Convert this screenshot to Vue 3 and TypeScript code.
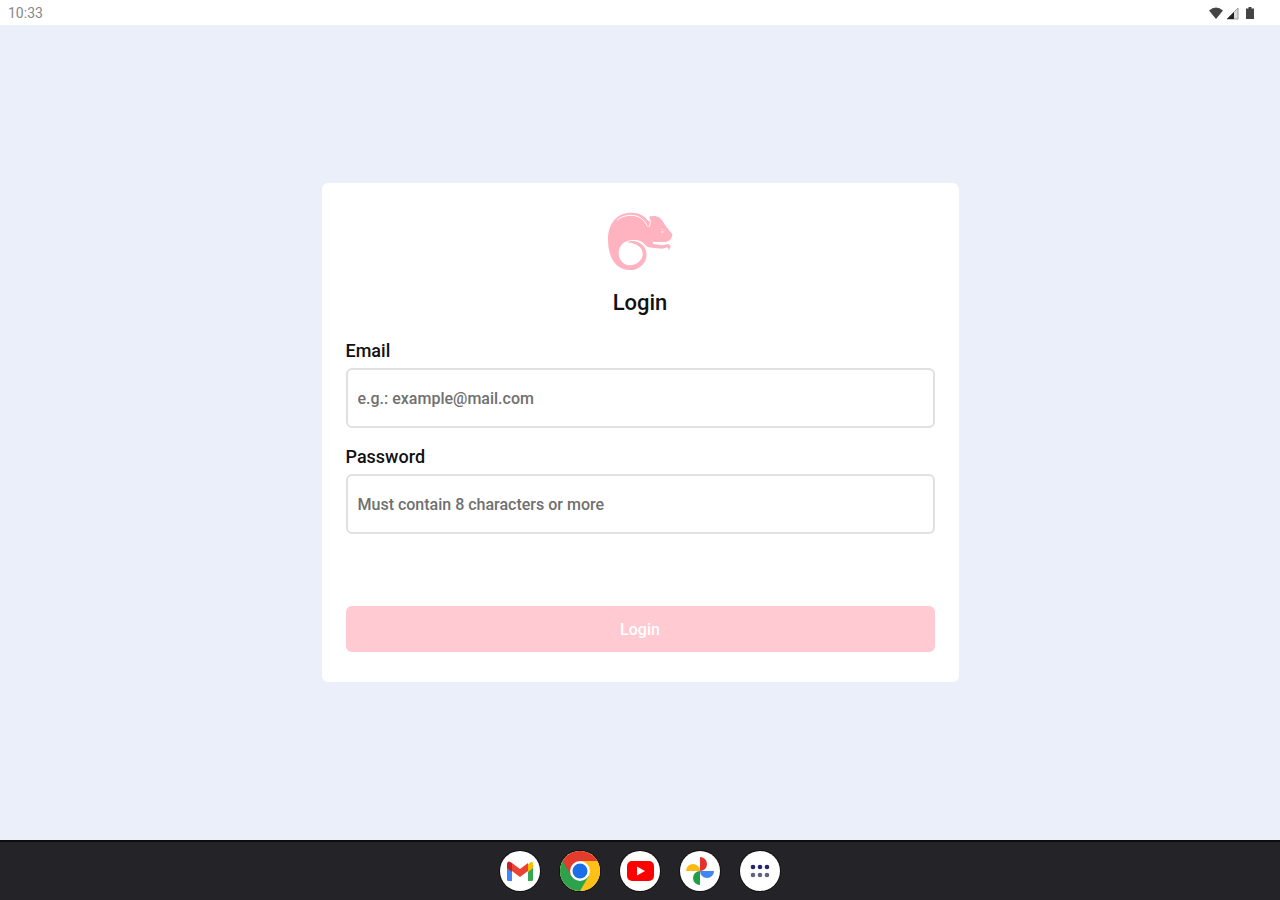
<script setup lang="ts">
import { ref } from 'vue'

const email = ref('')
const password = ref('')
</script>

<template>
  <div class="screen">
    <header class="status">
      <span class="clock">10:33</span>
      <div class="signals">
        <svg width="16" height="14" viewBox="0 0 16 14" aria-hidden="true">
          <path d="M1 4.500Q8-1.500 15 4.500L8 13Z" fill="#444" />
        </svg>
        <svg width="14" height="14" viewBox="0 0 14 14" aria-hidden="true">
          <path d="M1 13 12 2V13Z" fill="#ddd" stroke="#999" />
          <path d="M1 13 8 6V13Z" fill="#222" />
        </svg>
        <svg class="battery" width="8" height="14" viewBox="0 0 8 14" aria-hidden="true">
          <path d="M2.500 1h3v1.500H8V13H0V2.500h2.500Z" fill="#444" />
        </svg>
      </div>
    </header>

    <main class="stage">
      <form class="card" @submit.prevent>
        <svg class="logo" width="68" height="60" viewBox="48 33 204 180" aria-hidden="true">
          <path
            d="M54 118C54 68 83 38 124 38C148 38 164 48 174 62C177 66 179 65 179 60L177 50C186 47 202 48 210 54C218 60 220 69 229 80L247 103C246 117 239 124 227 126L190 125C187 129 190 132 196 133L218 136L235 132L242 139L238 150L232 142L217 146L185 143C175 142 169 141 164 139C170 147 172 156 170 168C166 193 145 210 119 210C82 210 54 180 54 118Z"
            fill="#ffb3c0"
          />
          <path
            d="M124 121C145 117 158 124 174 142L172 160C168 182 151 197 124 197C101 197 86 180 86 159C86 138 102 122 124 121Z"
            fill="#fff"
          />
          <path
            d="M110 127C129 118 151 124 163 141C174 159 170 180 157 194C146 205 133 210 119 210L115 195C133 198 147 189 155 175C164 157 155 130 110 127Z"
            fill="#ffb3c0"
          />
          <path
            d="M82 60C99 44 134 40 155 56C163 62 168 70 172 78"
            fill="none"
            stroke="#fff"
            stroke-width="3"
            stroke-linecap="round"
          />
          <path d="M177 53C183 64 182 72 177 80" fill="none" stroke="#fff" stroke-width="3" stroke-linecap="round" />
          <path d="M188 129H226" stroke="#fff" stroke-width="5" />
          <circle cx="217" cy="96" r="4" fill="#ffdce2" />
          <path d="M210 89Q218 83 225 92" fill="none" stroke="#ffd3da" stroke-width="2" />
        </svg>
        <h1 class="title">Login</h1>

        <div class="field">
          <label for="email">Email</label>
          <input id="email" v-model="email" type="email" placeholder="e.g.: example@mail.com" />
        </div>
        <div class="field">
          <label for="password">Password</label>
          <input id="password" v-model="password" type="password" placeholder="Must contain 8 characters or more" />
        </div>

        <button class="submit" type="submit">Login</button>
      </form>
    </main>

    <nav class="dock" aria-label="Apps">
      <button class="app" type="button" aria-label="Gmail">
        <svg viewBox="0 0 40 40" aria-hidden="true">
          <path d="M7 14 12 18V30H8.500Q7 30 7 28.500Z" fill="#4285f4" />
          <path d="M28 18 33 14V28.500Q33 30 31.500 30H28Z" fill="#34a853" />
          <path d="M28 13.500Q33 8 33 14V17L28 21Z" fill="#fbbc04" />
          <path d="M7 14Q7 8 12 12V21L7 17Z" fill="#c5221f" />
          <path d="M12 12 20 18 28 12V20L20 26 12 20Z" fill="#ea4335" />
        </svg>
      </button>
      <button class="app" type="button" aria-label="Chrome">
        <svg viewBox="0 0 40 40" aria-hidden="true">
          <circle cx="20" cy="20" r="20" fill="#fbc116" />
          <path d="M20 20 2.700 10A20 20 0 0 0 20 40L28.700 25Z" fill="#2da24c" />
          <path d="M2.700 10A20 20 0 0 1 37.300 10H20L11.300 25Z" fill="#e33b2e" />
          <circle cx="20" cy="20" r="10" fill="#fff" />
          <circle cx="20" cy="20" r="7.500" fill="#1a6fe8" />
        </svg>
      </button>
      <button class="app" type="button" aria-label="YouTube">
        <svg viewBox="0 0 40 40" aria-hidden="true">
          <rect x="7" y="10" width="27" height="20" rx="5" fill="#f00" />
          <path d="M17 15.500V24.500L25 20Z" fill="#fff" />
        </svg>
      </button>
      <button class="app" type="button" aria-label="Photos">
        <svg viewBox="0 0 40 40" aria-hidden="true">
          <path d="M20 6A7 7 0 0 1 20 20Z" fill="#e5322d" />
          <path d="M34 20A7 7 0 0 1 20 20Z" fill="#4285f4" />
          <path d="M20 34A7 7 0 0 1 20 20Z" fill="#1e9e45" />
          <path d="M6 20A7 7 0 0 1 20 20Z" fill="#fbb912" />
        </svg>
      </button>
      <button class="app" type="button" aria-label="All apps">
        <svg viewBox="0 0 40 40" aria-hidden="true">
          <g fill="#25256f">
            <circle cx="13" cy="16" r="2.300" />
            <circle cx="20" cy="16" r="2.300" />
            <circle cx="27" cy="16" r="2.300" />
          </g>
          <g fill="#62627c">
            <circle cx="13" cy="24" r="2.300" />
            <circle cx="20" cy="24" r="2.300" />
            <circle cx="27" cy="24" r="2.300" />
          </g>
        </svg>
      </button>
    </nav>
  </div>
</template>

<style>
body {
  margin: 0;
}
</style>

<style scoped>
.screen {
  display: flex;
  flex-direction: column;
  min-height: 100vh;
  background: #eaeff9;
  color: #111;
  font-family: Roboto, "Liberation Sans", sans-serif;
}

.status {
  display: flex;
  align-items: center;
  justify-content: space-between;
  height: 25px;
  padding: 0 26px 0 8px;
  background: #fff;
}

.clock {
  color: #888;
  font-size: 14px;
}

.signals {
  display: flex;
  align-items: center;
  gap: 2px;
}

.battery {
  margin-left: 4px;
}

.stage {
  display: flex;
  flex: 1;
  align-items: center;
  justify-content: center;
}

.card {
  box-sizing: border-box;
  display: flex;
  flex-direction: column;
  width: 50%;
  min-width: 320px;
  max-width: 637px;
  padding: 28px 24px 30px;
  border-radius: 6px;
  background: #fff;
}

.logo {
  align-self: center;
}

.title {
  margin: 18px 0 24px;
  font-size: 22px;
  font-weight: 500;
  line-height: 28px;
  text-align: center;
}

.field {
  display: flex;
  flex-direction: column;
  gap: 7px;
  margin-bottom: 19px;
}

.field label {
  font-size: 18px;
  font-weight: 500;
  line-height: 20px;
}

.field input {
  box-sizing: border-box;
  width: 100%;
  height: 60px;
  padding: 0 10px;
  border: 2px solid #e0e0e0;
  border-radius: 6px;
  background: #fff;
  color: #111;
  font: 500 16px Roboto, "Liberation Sans", sans-serif;
}

.field input::placeholder {
  color: #707070;
  opacity: 1;
}

.submit {
  height: 46px;
  margin-top: 53px;
  border: 0;
  border-radius: 6px;
  background: #ffcad2;
  color: #fff;
  font: 500 16px Roboto, "Liberation Sans", sans-serif;
}

.dock {
  box-sizing: border-box;
  display: flex;
  align-items: center;
  justify-content: center;
  gap: 20px;
  height: 60px;
  border-top: 2px solid #0c0c0e;
  background: #232328;
}

.app {
  width: 40px;
  height: 40px;
  padding: 0;
  border: 0;
  border-radius: 50%;
  background: #fff;
  box-shadow: 0 0 0 1px #111;
}

.app svg {
  display: block;
  width: 100%;
  height: 100%;
}
</style>
